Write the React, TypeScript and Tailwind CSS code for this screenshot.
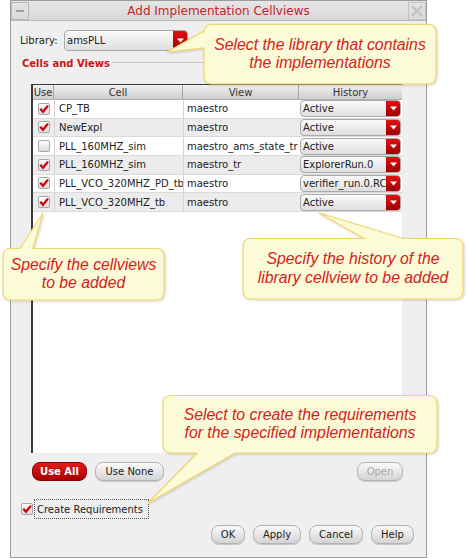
import React from "react";

const ui = { fontFamily: '"DejaVu Sans", Verdana, sans-serif' };
const callFont = { fontFamily: '"Liberation Sans", Arial, sans-serif' };

function Check({ on }: { on: boolean }) {
  return (
    <div className="w-[12px] h-[12px] rounded-[2px] border border-[#a8a8a8] bg-gradient-to-b from-white to-[#dcdcdc] flex items-center justify-center">
      {on && (
        <svg width="10" height="10" viewBox="0 0 10 10">
          <path d="M1.3 4.8 L4 7.8 L9 1.6" fill="none" stroke="#d40000" strokeWidth="2.3" strokeLinejoin="miter" />
        </svg>
      )}
    </div>
  );
}

function Arrow() {
  return (
    <svg width="7" height="5" viewBox="0 0 7 5">
      <path d="M0 0.5 H7 L3.5 4.5 Z" fill="#ffffff" />
    </svg>
  );
}

function Combo({ text, w, h }: { text: string; w: string; h: string }) {
  return (
    <div className={`${w} ${h} flex rounded-[4px] border border-[#a9a9a9] bg-gradient-to-b from-[#fbfbfb] to-[#dedede] overflow-hidden`}>
      <div className="flex-1 flex items-center pl-[2px] text-[10px] text-[#222] whitespace-nowrap overflow-hidden">{text}</div>
      <div className="w-[14px] flex items-center justify-center bg-gradient-to-b from-[#e01010] to-[#a00000]">
        <Arrow />
      </div>
    </div>
  );
}

const rows = [
  { on: true, cell: "CP_TB", view: "maestro", hist: "Active" },
  { on: true, cell: "NewExpl", view: "maestro", hist: "Active" },
  { on: false, cell: "PLL_160MHZ_sim", view: "maestro_ams_state_tr", hist: "Active" },
  { on: true, cell: "PLL_160MHZ_sim", view: "maestro_tr", hist: "ExplorerRun.0" },
  { on: true, cell: "PLL_VCO_320MHZ_PD_tb", view: "maestro", hist: "verifier_run.0.RC" },
  { on: true, cell: "PLL_VCO_320MHZ_tb", view: "maestro", hist: "Active" },
];

function Btn({ children, w, kind }: { children: React.ReactNode; w: string; kind?: "red" | "dis" }) {
  if (kind === "red")
    return (
      <div className={`${w} h-[19px] rounded-[8px] border border-[#8a0000] bg-gradient-to-b from-[#e21a1a] to-[#a80000] text-white font-bold text-[10px] flex items-center justify-center`}>
        {children}
      </div>
    );
  return (
    <div
      className={`${w} h-[19px] rounded-[8px] border border-[#b4b4b4] bg-gradient-to-b from-[#fafafa] to-[#d4d4d4] text-[10px] flex items-center justify-center shadow-[0_1px_0_#c8c8c8] ${
        kind === "dis" ? "text-[#a8a8a8]" : "text-[#222]"
      }`}
    >
      {children}
    </div>
  );
}

function CalloutText({ x, y, w, h, lines }: { x: number; y: number; w: number; h: number; lines: string[] }) {
  return (
    <div
      className="absolute flex flex-col items-center justify-center text-[15.8px] leading-[18.5px] italic text-[#d42222] pointer-events-none"
      style={{ left: x, top: y, width: w, height: h, ...callFont }}
    >
      {lines.map((l) => (
        <div key={l} className="whitespace-nowrap">{l}</div>
      ))}
    </div>
  );
}

export default function App() {
  return (
    <div className="relative w-[469px] h-[559px] bg-white overflow-hidden" style={ui}>
      {/* Dialog */}
      <div className="ml-[10px] w-[417px] h-[558px] border border-[#9c9c9c] bg-[#efefef] flex flex-col">
        {/* Title bar */}
        <div className="h-[20px] flex border-b border-[#b8b8b8] bg-gradient-to-b from-[#e6e6e6] to-[#d8d8d8]">
          <div className="w-[18px] h-[18px] mt-[1px] border border-[#b8b8b8] flex items-center justify-center">
            <div className="w-[8px] h-[2px] bg-[#a0a0a0]" />
          </div>
          <div className="flex-1 flex items-center justify-center text-[12px] text-[#c3252b]">Add Implementation Cellviews</div>
          <div className="w-[18px] h-[18px] mt-[1px] border border-[#c4c4c4] flex items-center justify-center">
            <svg width="12" height="12" viewBox="0 0 12 12">
              <path d="M1 1 L11 11 M11 1 L1 11" stroke="#c2c2c2" strokeWidth="2.2" />
            </svg>
          </div>
        </div>

        {/* Library row */}
        <div className="flex items-center mt-[9px] h-[21px]">
          <div className="ml-[9px] w-[44px] text-[10px] text-[#222]">Library:</div>
          <Combo text="amsPLL" w="w-[124px]" h="h-[21px]" />
        </div>

        {/* Cells and Views */}
        <div className="flex items-center mt-[5px] h-[14px]">
          <div className="ml-[11px] text-[10px] font-bold text-[#d01414]">Cells and Views</div>
          <div className="ml-[2px] mr-[8px] flex-1 h-[2px] border-t border-[#c4c4c4] border-b-white" />
        </div>

        {/* Table */}
        <div className="ml-[20px] mt-[14px] w-[371px] h-[369px] border-l-2 border-t border-[#3c3c3c] bg-white flex flex-col">
          <div className="h-[15px] flex bg-gradient-to-b from-[#f2f2f2] to-[#cdcdcd] border-b border-[#b0b0b0] text-[10px] text-[#333]">
            <div className="w-[21px] border-r border-[#a8a8a8] flex items-center justify-center">Use</div>
            <div className="w-[129px] border-r border-[#a8a8a8] flex items-center justify-center">Cell</div>
            <div className="w-[116px] border-r border-[#a8a8a8] flex items-center justify-center">View</div>
            <div className="w-[103px] flex items-center justify-center">History</div>
          </div>
          {rows.map((r, i) => (
            <div key={i} className={`h-[18.67px] flex text-[10px] text-[#222] border-b border-[#dadada] ${i % 2 ? "bg-[#ececec]" : "bg-white"}`}>
              <div className="w-[21px] flex items-center justify-center">
                <Check on={r.on} />
              </div>
              <div className="w-[129px] border-l border-[#d4d4d4] flex items-center pl-[4px] whitespace-nowrap overflow-hidden">{r.cell}</div>
              <div className="w-[116px] border-l border-[#d4d4d4] flex items-center pl-[3px] whitespace-nowrap overflow-hidden">{r.view}</div>
              <div className="w-[103px] flex items-center pl-[1px]">
                <Combo text={r.hist} w="w-[101px]" h="h-[17px]" />
              </div>
            </div>
          ))}
        </div>

        {/* Use all / none / open */}
        <div className="flex items-center mt-[9px] h-[19px]">
          <div className="ml-[21px]">
            <Btn w="w-[55px]" kind="red">Use All</Btn>
          </div>
          <div className="ml-[8px]">
            <Btn w="w-[69px]">Use None</Btn>
          </div>
          <div className="ml-auto mr-[23px]">
            <Btn w="w-[46px]" kind="dis">Open</Btn>
          </div>
        </div>

        {/* Create requirements */}
        <div className="flex items-center mt-[18px] h-[20px]">
          <div className="ml-[10px]">
            <Check on={true} />
          </div>
          <div className="ml-[1px] h-[20px] w-[115px] border border-dotted border-[#555] flex items-center pl-[2px] text-[10px] text-[#222] whitespace-nowrap">
            Create Requirements
          </div>
        </div>

        {/* Bottom buttons */}
        <div className="flex items-center justify-end mt-[6px] mr-[12px] gap-[8px] h-[19px]">
          <Btn w="w-[34px]">OK</Btn>
          <Btn w="w-[48px]">Apply</Btn>
          <Btn w="w-[54px]">Cancel</Btn>
          <Btn w="w-[43px]">Help</Btn>
        </div>
      </div>

      {/* Callout shapes */}
      <svg className="absolute left-0 top-0 pointer-events-none" width="469" height="559">
        <defs>
          <filter id="sh" x="-10%" y="-10%" width="120%" height="130%">
            <feDropShadow dx="1" dy="1" stdDeviation="0.8" floodColor="#000" floodOpacity="0.18" />
          </filter>
        </defs>
        <g fill="#fbfbd8" stroke="#f2d56a" strokeWidth="1.2" filter="url(#sh)">
          <path d="M212 24.5 H428 Q436 24.5 436 32.5 V76 Q436 84 428 84 H212 Q204 84 204 76 V48 L167 52 L204 31 V32.5 Q204 24.5 212 24.5 Z" />
          <path d="M11 248.5 H20 L43 213 L33 248.5 H156 Q164 248.5 164 256.5 V292 Q164 300 156 300 H11 Q3 300 3 292 V256.5 Q3 248.5 11 248.5 Z" />
          <path d="M251 238.5 H364 L319 213 L403 238.5 H455 Q463 238.5 463 246.5 V291 Q463 299 455 299 H251 Q243 299 243 291 V246.5 Q243 238.5 251 238.5 Z" />
          <path d="M171 395.5 H429 Q437 395.5 437 403.5 V445 Q437 453 429 453 H235 L148 503 L197 453 H171 Q163 453 163 445 V403.5 Q163 395.5 171 395.5 Z" />
        </g>
      </svg>

      <CalloutText x={204} y={24} w={232} h={60} lines={["Select the library that contains", "the implementations"]} />
      <CalloutText x={3} y={248} w={161} h={52} lines={["Specify the cellviews", "to be added"]} />
      <CalloutText x={243} y={238} w={220} h={61} lines={["Specify the history of the", "library cellview to be added"]} />
      <CalloutText x={163} y={395} w={274} h={58} lines={["Select to create the requirements", "for the specified implementations"]} />
    </div>
  );
}
